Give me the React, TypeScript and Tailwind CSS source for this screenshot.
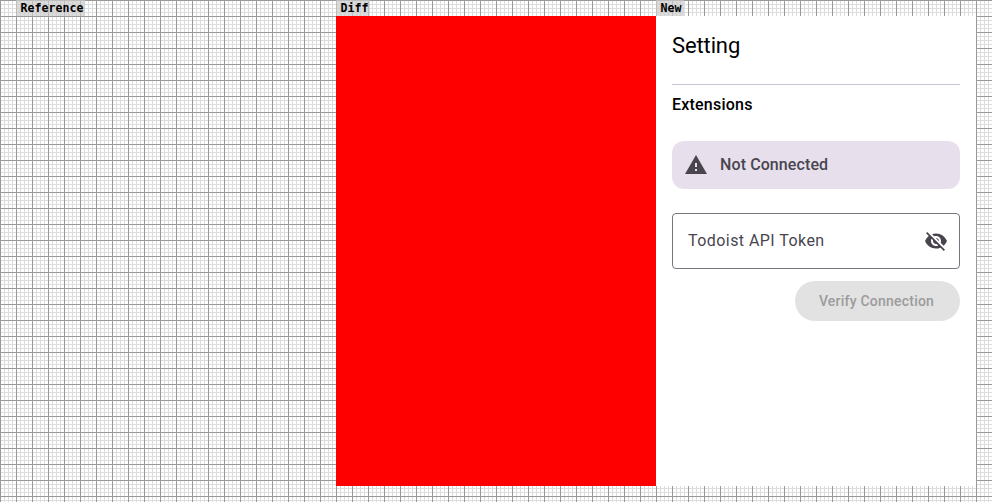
import { MdVisibilityOff, MdWarning } from "react-icons/md";

const vertical = (step: number, color: string) =>
  `repeating-linear-gradient(to right, ${color} 0 1px, transparent 1px ${step}px)`;
const horizontal = (step: number, color: string) =>
  `repeating-linear-gradient(to bottom, ${color} 0 1px, transparent 1px ${step}px)`;

const grid = [
  vertical(16, "#999999"),
  horizontal(16, "#999999"),
  vertical(4, "#dddddd"),
  horizontal(4, "#dddddd"),
].join(", ");

function Label({ text, width }: { text: string; width: number }) {
  return (
    <div
      className="h-4 whitespace-pre bg-[#cccccc]/70 pl-[4.5px] font-['DejaVu_Sans_Mono',monospace] text-[11.6px] leading-4 font-bold tracking-[0.02px] text-black"
      style={{ width }}
    >
      {text}
    </div>
  );
}

function Settings() {
  return (
    <div className="h-[470px] bg-white px-4 font-[Roboto,sans-serif]">
      <h1 className="h-[68px] pt-4 text-[22px] leading-7 tracking-[-0.12px] text-black">Setting</h1>
      <div className="h-px bg-[#cac4d0]" />
      <h2 className="mt-2 text-base leading-6 font-medium tracking-[0.22px] text-black">Extensions</h2>
      <div className="mt-6 flex h-12 items-center gap-3 rounded-xl bg-[#e7e0ec] px-3 text-[#49454f]">
        <MdWarning size={24} />
        <span className="text-base font-medium tracking-[0.1px]">Not Connected</span>
      </div>
      <div className="mt-6 flex h-14 items-center justify-between rounded border border-[#79747e] pr-[11px] pl-[15px] text-[#49454f]">
        <span className="text-base tracking-[0.44px]">Todoist API Token</span>
        <MdVisibilityOff size={24} />
      </div>
      <div className="mt-3 flex justify-end">
        <button className="h-10 w-[165px] rounded-full bg-[#e2e2e2] pr-[2px] text-sm font-medium tracking-[0.22px] text-[#9c9b9d]">
          Verify Connection
        </button>
      </div>
    </div>
  );
}

export default function App() {
  return (
    <main className="flex h-[502px] w-[992px] overflow-hidden bg-white pl-4" style={{ backgroundImage: grid }}>
      <section className="w-80">
        <Label text="Reference" width={69} />
      </section>
      <section className="w-80">
        <Label text="Diff" width={34} />
        <div className="h-[470px] bg-[#ff0000]" />
      </section>
      <section className="w-80">
        <Label text="New" width={28} />
        <Settings />
      </section>
    </main>
  );
}
